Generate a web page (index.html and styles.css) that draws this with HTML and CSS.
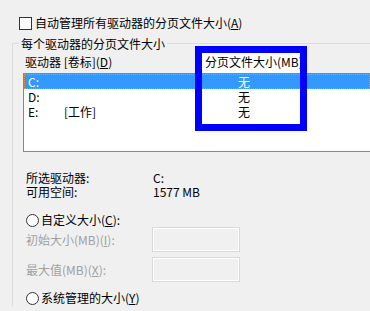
FILE: index.html
```html
<!DOCTYPE html>
<html lang="zh-CN">
<head>
<meta charset="utf-8">
<title>虚拟内存</title>
<link rel="stylesheet" href="styles.css">
</head>
<body>
<div class="page">
  <div class="auto-row">
    <span class="checkbox"></span>
    <span class="auto-label">自动管理所有驱动器的分页文件大小(<u>A</u>)</span>
  </div>

  <div class="group">
    <div class="group-title">每个驱动器的分页文件大小</div>

    <div class="list-head">
      <span class="head-drive">驱动器 [卷标](<u>D</u>)</span>
      <span class="head-size">分页文件大小(MB)</span>
    </div>

    <div class="listbox">
      <div class="list-row selected">
        <span class="col-drive">C:</span><span class="col-label"></span><span class="col-size">无</span>
      </div>
      <div class="list-row">
        <span class="col-drive">D:</span><span class="col-label"></span><span class="col-size">无</span>
      </div>
      <div class="list-row">
        <span class="col-drive">E:</span><span class="col-label">[工作]</span><span class="col-size">无</span>
      </div>
    </div>

    <div class="info">
      <div class="info-row"><span class="info-key">所选驱动器:</span><span>C:</span></div>
      <div class="info-row"><span class="info-key">可用空间:</span><span>1577 MB</span></div>
    </div>

    <div class="radio-row custom">
      <span class="radio"></span>
      <span>自定义大小(<u>C</u>):</span>
    </div>

    <div class="field-row first">
      <span class="field-label">初始大小(MB)(<u>I</u>):</span>
      <span class="field-input"></span>
    </div>
    <div class="field-row second">
      <span class="field-label">最大值(MB)(<u>X</u>):</span>
      <span class="field-input"></span>
    </div>

    <div class="radio-row system">
      <span class="radio"></span>
      <span>系统管理的大小(<u>Y</u>)</span>
    </div>
  </div>
</div>
<div class="highlight"></div>
</body>
</html>
```

FILE: styles.css
```css
html, body {
  margin: 0;
  padding: 0;
}
body {
  width: 370px;
  height: 311px;
  overflow: hidden;
  background: #f0f0f0;
  font-family: "Noto Sans CJK SC", "Microsoft YaHei", sans-serif;
  font-size: 12px;
  color: #000;
  position: relative;
}
u {
  text-decoration: underline;
  text-underline-offset: 1px;
}
.page {
  padding-top: 15px;
}
.auto-row {
  display: flex;
  align-items: center;
  height: 16px;
  line-height: 16px;
  padding-left: 19px;
}
.checkbox {
  width: 11px;
  height: 11px;
  border: 1px solid #333;
  background: #fff;
  margin-right: 3px;
}
.group {
  margin-top: 12px;
  margin-left: 12px;
  border-top: 1px solid #dcdcdc;
  border-left: 1px solid #dcdcdc;
}
.group-title {
  width: fit-content;
  margin-top: -8px;
  margin-left: 6px;
  padding: 0 2px;
  line-height: 16px;
  height: 16px;
  background: #f0f0f0;
}
.list-head {
  display: grid;
  grid-template-columns: 189px 98px;
  height: 21px;
  line-height: 19px;
}
.head-drive {
  padding-left: 12px;
  white-space: nowrap;
}
.head-size {
  background: #fff;
  padding-left: 3px;
  white-space: nowrap;
  overflow: hidden;
}
.listbox {
  margin-left: 10px;
  height: 77px;
  border: 1px solid #828790;
  border-right: none;
  background: #fff;
}
.list-row {
  display: grid;
  grid-template-columns: 40px 136px 88px 1fr;
  height: 15px;
  line-height: 15px;
}
.list-row.selected {
  background: #3399ff;
  color: #fff;
  outline: 1px dotted #e8903c;
  outline-offset: -1px;
}
.col-drive {
  padding-left: 4px;
}
.col-size {
  text-align: center;
}
.info {
  margin-top: 19px;
  padding-left: 13px;
}
.info-row {
  display: flex;
  height: 14px;
  line-height: 14px;
}
.info-key {
  width: 127px;
}
.radio-row {
  display: flex;
  align-items: center;
  height: 16px;
  line-height: 16px;
  padding-left: 13px;
}
.radio-row.custom {
  margin-top: 13px;
}
.radio-row.system {
  margin-top: 8px;
}
.radio {
  width: 11px;
  height: 11px;
  border: 1px solid #333;
  border-radius: 50%;
  background: #fff;
  margin-right: 2px;
}
.field-row {
  display: flex;
  align-items: center;
  height: 25px;
  padding-left: 13px;
  color: #a0a0a0;
}
.field-row.first {
  margin-top: -1px;
}
.field-row.second {
  margin-top: 5px;
}
.field-label {
  width: 126px;
  line-height: 16px;
}
.field-input {
  box-sizing: border-box;
  width: 88px;
  height: 25px;
  border: 1px solid #d9d9d9;
  box-shadow: inset 0 0 0 1px #fff;
  background: #f0f0f0;
}
.highlight {
  position: absolute;
  left: 195px;
  top: 46px;
  width: 98px;
  height: 71px;
  border: 7px solid #0000ff;
}
```
